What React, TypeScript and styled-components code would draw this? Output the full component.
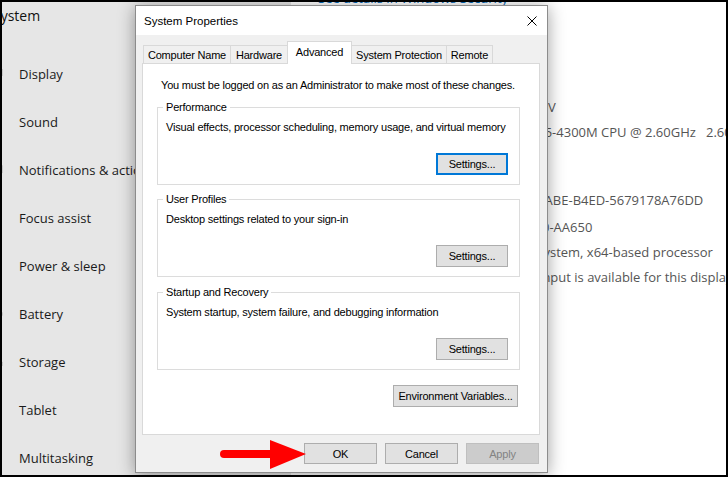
import styled, { createGlobalStyle } from 'styled-components';
import {
  Monitor,
  Volume1,
  MessageSquare,
  Moon,
  Power,
  BatteryMedium,
  HardDrive,
  Tablet,
  LayoutGrid,
} from 'lucide-react';

const GlobalStyle = createGlobalStyle`
  html, body {
    margin: 0;
    padding: 0;
    background: #000;
  }
`;

const Screen = styled.div`
  position: relative;
  width: 728px;
  height: 477px;
  box-sizing: border-box;
  border: 2px solid #000;
  display: flex;
  overflow: hidden;
  background: #fff;
  font-family: 'Open Sans', 'Noto Sans', sans-serif;
`;

const Sidebar = styled.nav`
  width: 289px;
  flex: none;
  background: #e6e6e6;
  display: flex;
  flex-direction: column;
`;

const SideTitle = styled.div`
  flex: none;
  height: 24px;
  line-height: 24px;
  margin: 2px 0 22px -9px;
  font-size: 14px;
  color: #111;
  white-space: nowrap;
`;

const NavItem = styled.div`
  flex: none;
  height: 48px;
  display: flex;
  align-items: center;
  gap: 16px;
  font-size: 13px;
  color: #1a1a1a;
  white-space: nowrap;
  svg {
    margin-left: -15px;
    flex: none;
  }
`;

const Content = styled.main`
  flex: 1;
  padding-left: 27px;
  color: #555;
  font-size: 13px;
  white-space: nowrap;
`;

const Link = styled.div`
  margin-top: -14px;
  line-height: 20px;
  color: #0067b8;
`;

const Heading = styled.div<{ $top: number }>`
  margin-top: ${(p) => p.$top}px;
  line-height: 28px;
  font-size: 20px;
  color: #000;
`;

const SpecList = styled.div`
  margin-top: 6px;
  display: flex;
  flex-direction: column;
`;

const SpecRow = styled.div<{ $top?: number }>`
  display: grid;
  grid-template-columns: 119px auto;
  line-height: 25px;
  height: 25px;
  margin-top: ${(p) => p.$top ?? 0}px;
  white-space: pre;
`;

const Dialog = styled.div`
  position: absolute;
  left: 133px;
  top: 3px;
  width: 413px;
  height: 468px;
  box-sizing: border-box;
  border: 1px solid #8c8c8c;
  background: #f0f0f0;
  box-shadow: 0 2px 16px rgba(0, 0, 0, 0.38);
  display: flex;
  flex-direction: column;
  font-family: 'Liberation Sans', Arial, sans-serif;
  font-size: 11px;
  letter-spacing: -0.2px;
  color: #000;
`;

const TitleBar = styled.div`
  height: 29px;
  flex: none;
  background: #fff;
  display: flex;
  align-items: center;
  justify-content: space-between;
  padding: 0 10px 0 8px;
`;

const Title = styled.span`
  font-size: 11.5px;
  letter-spacing: 0;
`;

const Body = styled.div`
  flex: 1;
  display: flex;
  flex-direction: column;
  padding: 8px 7px 8px 6px;
`;

const TabRow = styled.div`
  height: 21px;
  display: flex;
  align-items: flex-end;
  padding-left: 1px;
  position: relative;
  z-index: 1;
`;

const Tab = styled.div<{ $active?: boolean; $w: number }>`
  width: ${(p) => p.$w}px;
  height: ${(p) => (p.$active ? 20 : 17)}px;
  margin-bottom: ${(p) => (p.$active ? 0 : 1)}px;
  margin-left: -1px;
  box-sizing: content-box;
  border: 1px solid #d9d9d9;
  border-bottom: none;
  background: ${(p) => (p.$active ? '#fff' : '#f0f0f0')};
  display: flex;
  align-items: center;
  justify-content: center;
  padding-bottom: ${(p) => (p.$active ? 2 : 0)}px;
  &:first-child {
    margin-left: 0;
  }
`;

const Panel = styled.div`
  flex: 1;
  margin-top: -1px;
  background: #fff;
  border: 1px solid #d9d9d9;
  padding: 14px 19px 0 14px;
  display: flex;
  flex-direction: column;
`;

const Intro = styled.div`
  line-height: 14px;
  margin-left: 4px;
`;

const Group = styled.fieldset<{ $top: number }>`
  margin: ${(p) => p.$top}px 0 0;
  padding: 6px 11px 9px 8px;
  border: 1px solid #dcdcdc;
  display: flex;
  flex-direction: column;
  min-width: 0;
`;

const Legend = styled.legend`
  padding: 0 3px;
  margin-left: -3px;
  line-height: 14px;
`;

const GroupText = styled.div`
  line-height: 14px;
`;

const Button = styled.button<{ $focus?: boolean; $w: number }>`
  width: ${(p) => p.$w}px;
  height: 22px;
  box-sizing: border-box;
  align-self: flex-end;
  background: #e1e1e1;
  border: ${(p) => (p.$focus ? '2px solid #0078d7' : '1px solid #adadad')};
  font: inherit;
  letter-spacing: inherit;
  color: #000;
  padding: 0;
  margin-top: ${(p) => (p.$focus !== undefined ? 19 : 0)}px;
  &:disabled {
    background: #cccccc;
    border-color: #bfbfbf;
    color: #838383;
  }
`;

const EnvButton = styled(Button)`
  margin: 15px 2px 0 0;
`;

const ButtonBar = styled.div`
  display: flex;
  justify-content: flex-end;
  gap: 8px;
  margin-top: 8px;
  padding-right: 1px;
  button {
    height: 21px;
  }
`;

const Arrow = styled.svg`
  position: absolute;
  left: 214px;
  top: 434px;
`;

const navItems = [
  { icon: Monitor, label: 'Display' },
  { icon: Volume1, label: 'Sound' },
  { icon: MessageSquare, label: 'Notifications & actions' },
  { icon: Moon, label: 'Focus assist' },
  { icon: Power, label: 'Power & sleep' },
  { icon: BatteryMedium, label: 'Battery' },
  { icon: HardDrive, label: 'Storage' },
  { icon: Tablet, label: 'Tablet' },
  { icon: LayoutGrid, label: 'Multitasking' },
];

const specs = [
  { label: 'Device name', value: 'DESKTOP-7K2QH3V' },
  { label: 'Processor', value: 'Intel(R) Core(TM) i5-4300M CPU @ 2.60GHz   2.60 GHz' },
  { label: 'Installed RAM', value: '8.00 GB' },
  { label: 'Device ID', value: '3C1F97A2-6D0E-4ABE-B4ED-5679178A76DD', top: 18 },
  { label: 'Product ID', value: '00330-80000-0000-AA650', top: 2 },
  { label: 'System type', value: '64-bit operating system, x64-based processor' },
  { label: 'Pen and touch', value: 'No pen or touch input is available for this display' },
];

const tabs = [
  { label: 'Computer Name', w: 86 },
  { label: 'Hardware', w: 56 },
  { label: 'Advanced', w: 63, active: true },
  { label: 'System Protection', w: 94 },
  { label: 'Remote', w: 45 },
];

const groups = [
  {
    title: 'Performance',
    text: 'Visual effects, processor scheduling, memory usage, and virtual memory',
    focus: true,
    top: 8,
  },
  { title: 'User Profiles', text: 'Desktop settings related to your sign-in', focus: false, top: 7 },
  {
    title: 'Startup and Recovery',
    text: 'System startup, system failure, and debugging information',
    focus: false,
    top: 8,
  },
];

export default function App() {
  return (
    <>
      <GlobalStyle />
      <Screen>
        <Sidebar>
          <SideTitle>System</SideTitle>
          {navItems.map(({ icon: Icon, label }) => (
            <NavItem key={label}>
              <Icon size={16} strokeWidth={1.3} color="#1a1a1a" />
              {label}
            </NavItem>
          ))}
        </Sidebar>
        <Content>
          <Link>See details in Windows Security</Link>
          <Heading $top={53}>Device specifications</Heading>
          <SpecList>
            {specs.map((s) => (
              <SpecRow key={s.label} $top={s.top}>
                <span>{s.label}</span>
                <span>{s.value}</span>
              </SpecRow>
            ))}
          </SpecList>
          <Heading $top={140}>Windows specifications</Heading>
          <SpecList>
            <SpecRow $top={4}>
              <span>Edition</span>
              <span>Windows 10 Pro</span>
            </SpecRow>
          </SpecList>
        </Content>

        <Dialog>
          <TitleBar>
            <Title>System Properties</Title>
            <svg width="10" height="10" viewBox="0 0 10 10">
              <path d="M0.5 0.5 L9.5 9.5 M9.5 0.5 L0.5 9.5" stroke="#000" strokeWidth="1" />
            </svg>
          </TitleBar>
          <Body>
            <TabRow>
              {tabs.map((t) => (
                <Tab key={t.label} $w={t.w} $active={t.active}>
                  {t.label}
                </Tab>
              ))}
            </TabRow>
            <Panel>
              <Intro>You must be logged on as an Administrator to make most of these changes.</Intro>
              {groups.map((g) => (
                <Group key={g.title} $top={g.top}>
                  <Legend>{g.title}</Legend>
                  <GroupText>{g.text}</GroupText>
                  <Button $w={72} $focus={g.focus}>
                    Settings...
                  </Button>
                </Group>
              ))}
              <EnvButton $w={125}>Environment Variables...</EnvButton>
            </Panel>
            <ButtonBar>
              <Button $w={73}>OK</Button>
              <Button $w={73}>Cancel</Button>
              <Button $w={73} disabled>
                Apply
              </Button>
            </ButtonBar>
          </Body>
        </Dialog>

        <Arrow width="92" height="36" viewBox="0 0 92 36">
          <line x1="8" y1="18" x2="58" y2="18" stroke="#f00" strokeWidth="8" strokeLinecap="round" />
          <polygon points="54,4 90,18 54,33" fill="#f00" />
        </Arrow>
      </Screen>
    </>
  );
}
